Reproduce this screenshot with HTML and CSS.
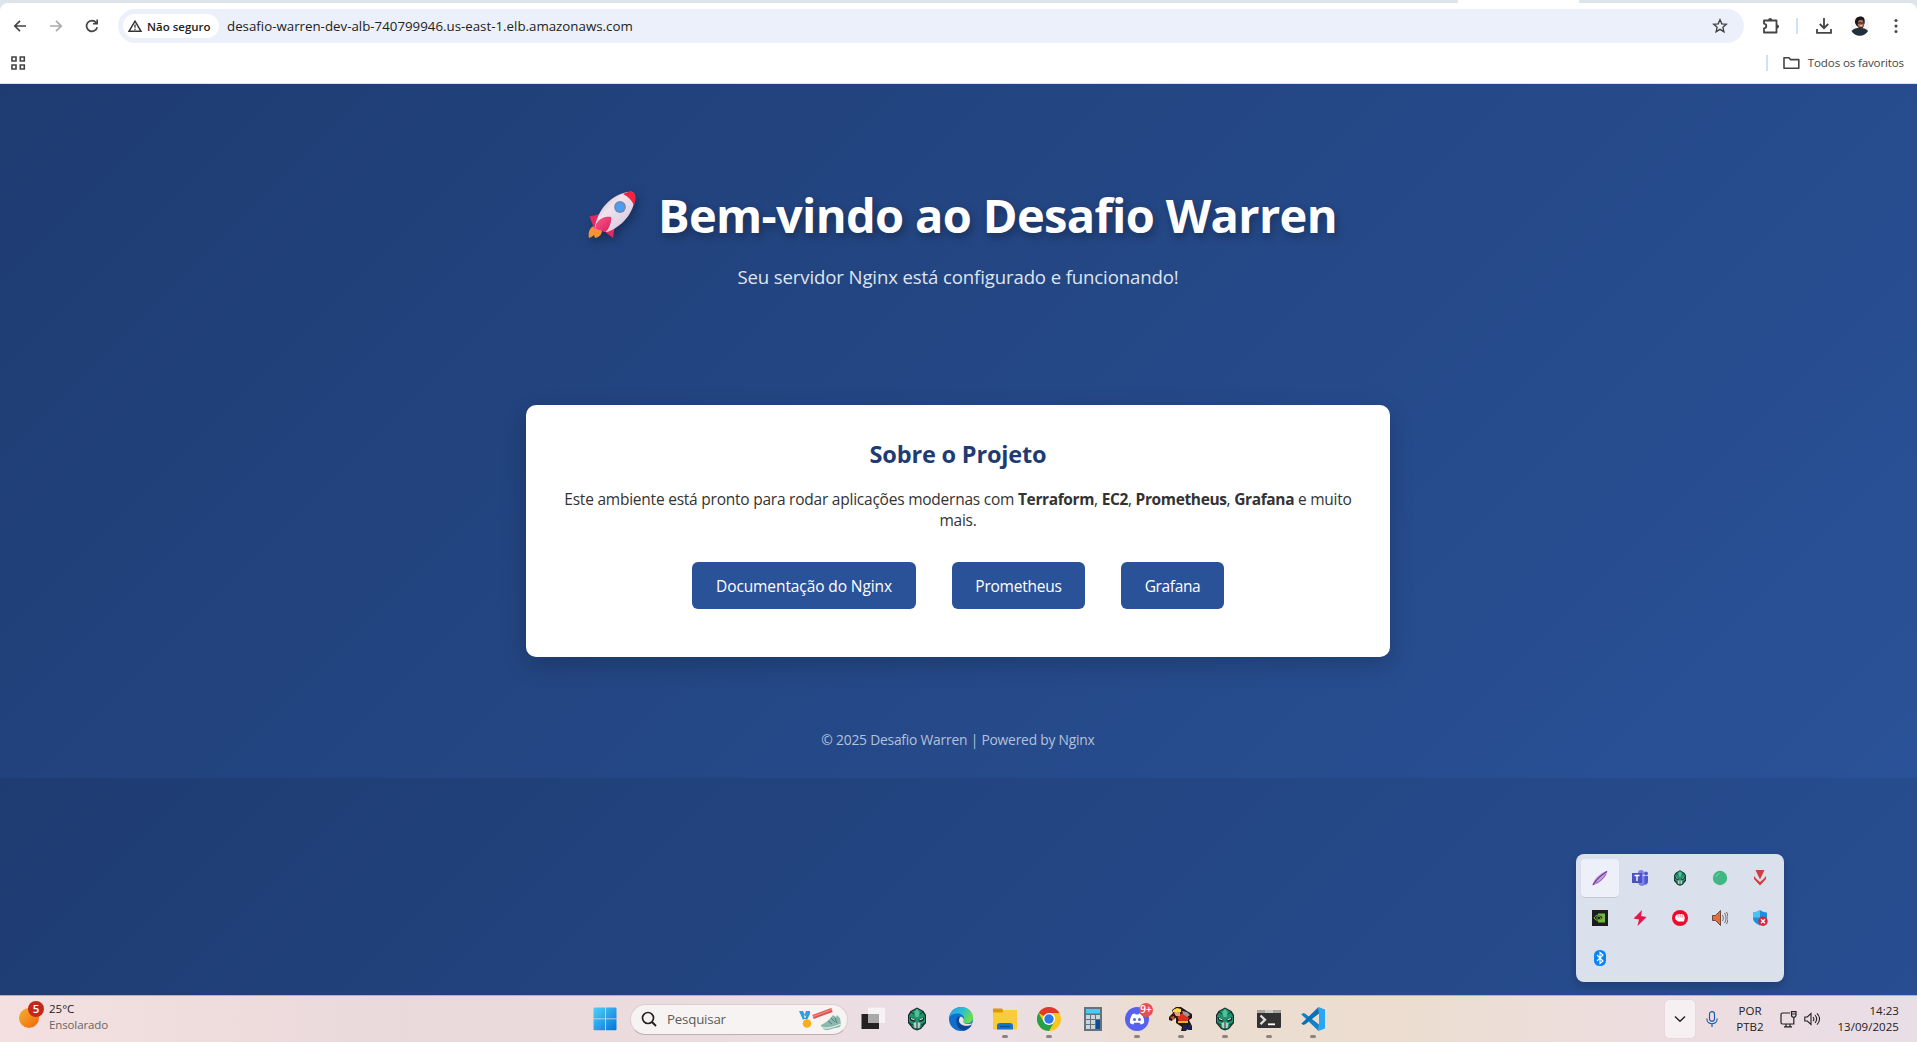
FILE: index.html
```html
<!DOCTYPE html>
<html lang="pt-BR">
<head>
<meta charset="utf-8">
<title>Desafio Warren</title>
<link rel="stylesheet" href="styles.css">
</head>
<body>
<div class="screen">
  <header class="browser">
    <div class="tabstrip"><i class="tab-gap"></i><i class="tab-active"></i></div>
    <div class="toolbar">
      <div class="nav">
        <svg class="ic" viewBox="0 0 16 16"><path d="M14 8H3M8 2.8 2.8 8 8 13.2" fill="none" stroke="#444" stroke-width="1.7"/></svg>
        <svg class="ic dim" viewBox="0 0 16 16"><path d="M2 8h11M8 2.8 13.2 8 8 13.2" fill="none" stroke="#444" stroke-width="1.7"/></svg>
        <svg class="ic" viewBox="0 0 16 16"><path d="M13.2 9.2A5.4 5.4 0 1 1 12 4.4l1 1.2" fill="none" stroke="#444" stroke-width="1.7"/><path d="M14 1.6v5H9V5h3.4V1.6z" fill="#444"/></svg>
      </div>
      <div class="omnibox">
        <div class="chip">
          <svg width="14" height="12" viewBox="0 0 14 12"><path d="M7 1.2 13 11.3H1z" fill="none" stroke="#333" stroke-width="1.4"/><path d="M7 4.6v3.2M7 8.8v1.3" stroke="#333" stroke-width="1.3"/></svg>
          <span>Não seguro</span>
        </div>
        <span class="url">desafio-warren-dev-alb-740799946.us-east-1.elb.amazonaws.com</span>
        <svg class="ic star" viewBox="0 0 16 16"><path d="m8 1.8 1.8 4.1 4.5.4-3.4 3 1 4.4L8 11.4l-3.9 2.3 1-4.4-3.4-3 4.5-.4z" fill="none" stroke="#444" stroke-width="1.4"/></svg>
      </div>
      <div class="actions">
        <svg width="18" height="18" viewBox="0 0 18 18"><path d="M2 3.5v3.2c1.600.300 2.300 1.300 2.300 2.400S3.500 11.200 2 11.500v4h12.500V3.500z" fill="none" stroke="#444" stroke-width="1.8" stroke-linejoin="round"/><path d="M6.200 3a2 2 0 0 1 4 0zM15 7.400a2 2 0 0 1 0 4z" fill="#444"/></svg>
        <i class="rule"></i>
        <svg width="16" height="16" viewBox="0 0 16 16"><path d="M8 0v10M3.800 6 8 10.200 12.200 6M1 11v3.800h14V11" fill="none" stroke="#444" stroke-width="1.800"/></svg>
        <svg class="avatar" width="20" height="20" viewBox="0 0 20 20"><circle cx="10" cy="10" r="9.500" fill="#f5f5f5"/><path d="M1.500 15c2-2.500 5-3 8-3s7 .5 8.500 3a9.500 9.500 0 0 1-16.500 0z" fill="#20303c"/><path d="M5 7C4.500 2.500 7.500.500 10.500.500c3.500 0 4.700 2.500 4 7l-1.500 4-3.500 1-3-3z" fill="#1c1716"/><ellipse cx="10.800" cy="8" rx="3" ry="4.300" fill="#a9705c"/><path d="M7.800 6.400h6v1.200h-6z" fill="#3b2723"/><path d="M8 10.300c1 3.200 4.500 3.200 5.500 0-1 .9-4 .9-5.500 0z" fill="#3e2925"/><path d="M9.800 9.800h2.400" stroke="#eee" stroke-width=".9"/></svg>
        <svg width="4" height="16" viewBox="0 0 4 16"><g fill="#444"><circle cx="2" cy="2.500" r="1.500"/><circle cx="2" cy="8" r="1.500"/><circle cx="2" cy="13.500" r="1.500"/></g></svg>
      </div>
    </div>
    <div class="bookmarks">
      <svg width="15" height="15" viewBox="0 0 15 15"><path d="M1 1h4v4H1zM9.300 1h4v4h-4zM1 9h4v4H1zM9.300 9h4v4h-4z" fill="none" stroke="#444" stroke-width="1.600"/></svg>
      <div class="all-marks"><i class="rule"></i>
        <svg width="17" height="14" viewBox="0 0 17 14"><path d="M1 1.800h5l1.600 1.800h8.200v8.600H1z" fill="none" stroke="#444" stroke-width="1.600" stroke-linejoin="round"/></svg>
        <span>Todos os favoritos</span></div>
    </div>
  </header>

  <main class="page">
    <div class="hero">
      <h1>
        <svg class="rocket" width="49" height="48" viewBox="0 0 49 48">
          <defs>
            <linearGradient id="rb" x1="0" y1="0" x2="1" y2="1"><stop offset="0" stop-color="#b9a6b4"/><stop offset=".4" stop-color="#efe3ee"/><stop offset="1" stop-color="#cfc0dc"/></linearGradient>
            <linearGradient id="rf" x1="0" y1="0" x2="1" y2="1"><stop offset="0" stop-color="#ff5a86"/><stop offset="1" stop-color="#d81f63"/></linearGradient>
          </defs>
          <path d="M7 34C1 37 0 42 1 47c3-1 4-2 5-3l1 3c5-1 7-4 7-8z" fill="#f99332"/>
          <path d="M12 23 1.500 25.500l5 13L15 31z" fill="#e22960"/>
          <path d="M27 34 25 47l-9-7 5-5z" fill="#e22960"/>
          <path d="M6.500 38C9 20 22 3 42 .8c3-.3 5 2 5 5C46 22 34 36 19 41z" fill="url(#rb)"/>
          <path d="M35 3c4-2 7.500-2.400 9.500-2C47 2 48 5 47.500 8c-.3 2-.6 4-1.500 6C43.500 9 40 5.500 35 3z" fill="#ee2440"/>
          <path d="M8 33c4-7 12-8 15-7 1 4-2 13-6 15l-6-2-4-1z" fill="url(#rf)"/>
          <circle cx="32" cy="16" r="5.900" fill="#7388b4"/><circle cx="32" cy="16" r="4.300" fill="#4a9df2"/>
        </svg>
        <span>Bem-vindo ao Desafio Warren</span>
      </h1>
      <p class="lead">Seu servidor Nginx está configurado e funcionando!</p>
    </div>
    <section class="card">
      <h2>Sobre o Projeto</h2>
      <p class="about"><span>Este ambiente está pronto para rodar aplicações modernas com <b>Terraform</b>, <b>EC2</b>, <b>Prometheus</b>, <b>Grafana</b> e muito</span><br>mais.</p>
      <div class="links"><a class="b1">Documentação do Nginx</a><a class="b2">Prometheus</a><a class="b3">Grafana</a></div>
    </section>
    <footer>© 2025 Desafio Warren | Powered by Nginx</footer>
  </main>

  <div class="tray-popup">
    <div class="cell on"><svg viewBox="0 0 16 16"><path d="M.500 15.500C1 9 8 3 15.500.500 14 8 8 13 .500 15.500z" fill="#c3a3dc"/><path d="M1 15C4 10 9 5 15 1.500" stroke="#7334a0" stroke-width="1.300" fill="none"/><path d="M4 13.500c4-2 7-5 10-9.500" stroke="#9560bd" stroke-width="1" fill="none"/></svg></div>
    <div class="cell"><svg viewBox="0 0 16 16"><circle cx="9" cy="3" r="3" fill="#7b83eb"/><circle cx="14" cy="3.500" r="2" fill="#5059c9"/><path d="M6 6h10v5c0 3-2 4-3.500 4C11 17 6 16 6 12z" fill="#7b83eb"/><path d="M12.500 6H16v5c0 2-1.500 3.500-3.500 3.500z" fill="#5059c9"/><path d="M0 3h10v10H0z" fill="#4b53bc"/><path d="M2.500 5.500h5M5 5.500V11" stroke="#fff" stroke-width="1.400"/></svg></div>
    <div class="cell"><svg viewBox="0 0 24 24"><use href="#mask"/></svg></div>
    <div class="cell"><svg viewBox="0 0 16 16"><circle cx="8" cy="8" r="7.200" fill="#41b883"/><path d="M4 7a4.500 4.500 0 0 1 3.500-3.500" stroke="#7fd3ad" fill="none"/></svg></div>
    <div class="cell"><svg viewBox="0 0 16 16"><path d="M3.500 0h9L8 9.500z" fill="#d63b3f"/><path d="M2 6v3l6 6.500L14 9V6l-2.500 3L8 12 4.500 9z" fill="#d63b3f"/></svg></div>
    <div class="cell"><svg viewBox="0 0 16 16"><path d="M0 0h16v16H0z" fill="#1c1c1e"/><path d="M6 3.500h7v9H6z" fill="#76b93f"/><path d="M2 8c2-3.500 6-4 9-.5-2.500 4-6.500 4-9 .5z" fill="#1c1c1e"/><path d="M2 8c2-3.500 6-4 9-.5-2.500 4-6.500 4-9 .5zM4.500 8c1-2 3.500-2 4.500 0-1 2-3.500 2-4.500 0z" fill="none" stroke="#76b93f" stroke-width="1"/></svg></div>
    <div class="cell"><svg viewBox="0 0 16 16"><path d="M10 0 1.500 8.500l5.500 1L5.500 16l9-9-5.500-1z" fill="#e6154c"/></svg></div>
    <div class="cell"><svg viewBox="0 0 16 16"><circle cx="8" cy="8" r="8" fill="#ec0b2f"/><path d="M3 7 4.500 4.800 7 4l3 0 2 1 .8 3L12 11.500H6L3.500 9.500z" fill="#fff"/><path d="M6.200 4.500v3M8.200 4v3.500M10.200 4.500v3" stroke="#ec0b2f" stroke-width=".5"/></svg></div>
    <div class="cell"><svg viewBox="0 0 16 16"><path d="M.5 5.500h3L8.500.5v15l-5-5h-3z" fill="#e0703f" stroke="#5f4034" stroke-width=".9"/><path d="M10.500 5c1 1.500 1 4.500 0 6M12.500 3c2 3 2 7 0 10M14.500 2c2 4 2 8 0 12" fill="none" stroke="#6a5850" stroke-width=".9"/></svg></div>
    <div class="cell"><svg viewBox="0 0 16 16"><path d="M1 2.500C4 2.500 6 1.500 8 0c2 1.500 4 2.500 7 2.500V8c0 4-4 6-7 7.500C4 13.500 1 11.500 1 8z" fill="#1e8fdc"/><path d="M1 7.500h7V0C6 1.500 4 2.500 1 2.500z" fill="#4cc2f1"/><circle cx="11" cy="11.300" r="4.700" fill="#d7263a"/><path d="m9 9.300 4 4m0-4-4 4" stroke="#fff" stroke-width="1.400"/></svg></div>
    <div class="cell"><svg viewBox="0 0 16 16"><rect x="2" width="12" height="16" rx="5.500" fill="#0a84f5"/><path d="m5 5 6 6-3 2.500v-11L11 5l-6 6" fill="none" stroke="#fff" stroke-width="1.100"/></svg></div>
  </div>

  <div class="taskbar">
    <div class="weather">
      <svg width="30" height="30" viewBox="0 0 30 30"><defs><linearGradient id="sun" x1="0" y1="0" x2="1" y2="1"><stop offset="0" stop-color="#f3b52e"/><stop offset="1" stop-color="#f2620c"/></linearGradient></defs><circle cx="11" cy="17" r="10" fill="url(#sun)"/><circle cx="18" cy="8" r="8" fill="#c4281c"/><text x="18" y="12" text-anchor="middle" class="badge">5</text></svg>
      <div class="two"><span>25°C</span><span class="soft">Ensolarado</span></div>
    </div>
    <div class="apps">
      <div class="app start"><svg viewBox="0 0 24 24"><defs><linearGradient id="win" x1="0" y1="0" x2="1" y2="1"><stop offset="0" stop-color="#4fd2fb"/><stop offset="1" stop-color="#0673d3"/></linearGradient></defs><path d="M1.500.500H12v11H.500v-10a1 1 0 0 1 1-1zM12.800.500h9.700a1 1 0 0 1 1 1v10H12.800zM.500 12.300H12v11H1.500a1 1 0 0 1-1-1zM12.800 12.300h10.700v10a1 1 0 0 1-1 1h-9.700z" fill="url(#win)"/></svg></div>
      <div class="search">
        <svg width="16" height="16" viewBox="0 0 16 16"><circle cx="7" cy="7" r="5.500" fill="none" stroke="#222" stroke-width="1.700"/><path d="m11 11 4 4" stroke="#222" stroke-width="1.900"/></svg>
        <span>Pesquisar</span>
        <svg class="deco" width="44" height="24" viewBox="0 0 44 24"><path d="M1 4h4l3 6-3 3zM12 4H8L6 10l3 3 3-6z" fill="#2b9fe0"/><circle cx="9" cy="16.500" r="4.300" fill="#f9b018"/><path d="M15 10 34 3" stroke="#d9534d" stroke-width="4"/><path d="M15 9.500 34 2.500" stroke="#ed837b" stroke-width="1.500"/><path d="M23 18c5-2 9-6 12-10l3 2 1-2 3 3 1 6c0 3-3 4-6 4l-7 2c-4 .5-7-2-7-5z" fill="#8ab8ae"/><path d="m30 14 4 3M33 11l4 4M37 11l2 5" stroke="#4d7f7c"/><path d="M23 20c5 3 13 0 20-3" stroke="#e5eeea" stroke-width="1.300" fill="none"/></svg>
      </div>
      <div class="app"><svg viewBox="0 0 24 24"><path d="M7 .500h17V16H7z" fill="#f5f3f3"/><path d="M.500 7H18v15H.500z" fill="#222"/><path d="M7 7h11v9H7z" fill="#aaa8a8"/></svg></div>
      <div class="app"><svg viewBox="0 0 24 24"><g id="mask"><path d="M12 .500 18.500 4 21 8v8l-5 6-4 1.500L8 22l-5-6V8l2.500-4z" fill="#16252a"/><path d="m12 1.500 5.500 3.200L20 9v6l-4.500 6-3.500 1.500L8.500 21 4 15V9l2.500-4.300z" fill="#20916a"/><path d="m12 2 2.500 3-1 5h-3l-1-5z" fill="#4cc497"/><path d="m4.500 10 6 2.500-1 2.500-4-1.500zM19.500 10l-6 2.500 1 2.500 4-1.500z" fill="#15292d"/><path d="m6 11.500 3.500 1.300M18 11.500l-3.500 1.300" stroke="#eafff4"/><path d="m8.500 16 3.500-1 3.500 1-1 5H9.500z" fill="#bacfc6"/><path d="M12 15v8M9 7 6 5M15 7l3-2M4 16l4 2M20 16l-4 2" stroke="#123b34"/></g></svg></div>
      <div class="app"><svg viewBox="0 0 24 24"><defs><linearGradient id="e1" x1="0" y1="0" x2="1" y2=".4"><stop offset="0" stop-color="#2d9fe6"/><stop offset=".55" stop-color="#28bdd2"/><stop offset="1" stop-color="#6ade4c"/></linearGradient></defs><circle cx="12" cy="12" r="12" fill="#0f6fcd"/><path d="M.2 10C1.500 3.500 6.500 0 12 0c7 0 12 5 12 10.500 0 4-3 6-6 6s-4-1.500-3.500-2.500c1.500-2 .500-6.500-4.500-7.500C5.500 6 2 7.500.2 10z" fill="url(#e1)"/><path d="M8.500 10c-3 5 .5 13 6 13.700 4-.7 7-3.200 8.300-6-6 3.300-13.300.5-12.800-4.700.2-1.500.8-2.500 1.500-3.300z" fill="#11458f"/><path d="M11.500 9.700c2 0 3.500 2 3.300 3.600-.8 1.700-.6 2.700 1.700 3.400 2 .7 4.500.4 6-.5l.4 1c-6 3.500-13 .500-12.900-4 0-1.500.5-2.500 1.500-3.500z" fill="#eee2e4"/></svg></div>
      <div class="app run"><svg viewBox="0 0 24 24"><path d="M0 1.500h9l2 3-2 3H0z" fill="#d79a0b"/><path d="M0 5.500h9L11.500 3H24v19.500H0z" fill="#fccb3c"/><path d="M4 22.500V19a3 3 0 0 1 3-3h10a3 3 0 0 1 3 3v3.500z" fill="#1774ce"/><path d="M7 19.500h10" stroke="#0d4c94" stroke-width="1.200"/></svg></div>
      <div class="app run"><svg viewBox="0 0 24 24"><circle cx="12" cy="12" r="12" fill="#fcc61d"/><path d="M12 12 1.600 6A12 12 0 0 1 22.400 6H12z" fill="#e0392d"/><path d="M1.600 6A12 12 0 0 0 12 24l5.200-9L12 12 6.800 15z" fill="#279f4b"/><circle cx="12" cy="12" r="6" fill="#fff"/><circle cx="12" cy="12" r="4.700" fill="#2a78ec"/></svg></div>
      <div class="app"><svg viewBox="0 0 24 24"><path d="M3 0h18v24H3z" fill="#64717f"/><path d="M5 2h14v4.500H5z" fill="#45cdf5"/><path d="M5 8h4v4H5zM10 8h4v4h-4zM15 8h4v4h-4zM5 13h4v4H5zM10 13h4v4h-4zM5 18h4v4H5zM10 18h4v4h-4z" fill="#ccd5da"/><path d="M15 13h4v9h-4z" fill="#0d4f94"/></svg></div>
      <div class="app run"><svg viewBox="0 0 24 24"><circle cx="12" cy="12" r="12" fill="#5661ef"/><path d="M7.500 7 10 6.500l.5 1h3l.5-1 2.500.5c2 3 3 6 2.500 9-1 .8-2 1.300-3.300 1.500l-1-1.700H9.300l-1 1.700C7 17.300 6 16.800 5 16c-.500-3 .500-6 2.500-9z" fill="#fff"/><circle cx="9.500" cy="12.500" r="1.500" fill="#5661ef"/><circle cx="14.500" cy="12.500" r="1.500" fill="#5661ef"/></svg><span class="count">9+</span></div>
      <div class="app run"><svg viewBox="0 0 24 24"><path d="m0 10 4-4-1-3 4-3h5l6 4 5 3v4l-3 2 3 6v4h-4l-1-1-1 2h-5l1-4-6-4v-5l-3 1-1 2-3-1z" fill="#241714"/><path d="m8 8 7-2 5 5-2 5-8-1-1-4z" fill="#dc2d1f"/><path d="M9 14h10v2H9z" fill="#eeb22b"/><path d="m4 3 4-2 4 1v3L7 6 4 5z" fill="#ffd94b"/><path d="m5 6 6-1v4H7z" fill="#e8a278"/><path d="m13 4 5 1 3 3-3 2-4-3z" fill="#9d9897"/><path d="m1 10 4-1 1 3-2 1z" fill="#b95837"/><path d="M14 18h4v5h-4zM19 18h3v5h-3z" fill="#1c2354"/></svg></div>
      <div class="app run"><svg viewBox="0 0 24 24"><use href="#mask"/></svg></div>
      <div class="app run"><svg viewBox="0 0 24 24"><rect y="3" width="24" height="18" rx="1.200" fill="#323232"/><path d="M1 3h22a1 1 0 0 1 1 1v2H0V4a1 1 0 0 1 1-1z" fill="#a5a3a2"/><path d="M8 3h8v3H8z" fill="#c9c6c4"/><path d="m3.500 8.500 4.500 4.300-4.500 4.300" fill="none" stroke="#ddd" stroke-width="2.300"/><path d="M11 17.300h7" stroke="#fff" stroke-width="1.800"/></svg></div>
      <div class="app run"><svg viewBox="0 0 24 24"><path d="m17.500 24-1-1L2 9 .3 7.500 2.300 6l2 .8L18 17.500z" fill="#0f82cb"/><path d="m17.500 0-1 1L2 15 .3 16.500 2.300 18l2-.8L18 6.500z" fill="#0a70b7"/><path d="M17.500 0 24 2.500v19L17.500 24l-1-1c.8.4 1.500 0 1.500-1V2c0-1-.7-1.400-1.500-1z" fill="#2aa7f2"/></svg></div>
    </div>
    <div class="tray">
      <div class="chev"><svg width="12" height="8" viewBox="0 0 12 8"><path d="m1 1.500 5 4.800 5-4.800" fill="none" stroke="#222" stroke-width="1.400"/></svg></div>
      <svg width="12" height="16" viewBox="0 0 12 16"><rect x="3.500" y=".7" width="5" height="9.500" rx="2.500" fill="none" stroke="#1c5cb0" stroke-width="1.200"/><path d="M.8 7.500c0 7 10.400 7 10.400 0M6 12.700V16" fill="none" stroke="#1c5cb0" stroke-width="1.200"/></svg>
      <div class="two lang"><span>POR</span><span>PTB2</span></div>
      <svg class="net" width="17" height="17" viewBox="0 0 17 17"><path d="M10 2H2.500a1.500 1.500 0 0 0-1.500 1.500v8A1.500 1.500 0 0 0 2.500 13h11.300V7M4 15.800h8M6 13v2.800M10 13v2.800M11.500.600h4.500V4a2.200 2.200 0 0 1-4.500 0zM12 3h4M13.800 6v2" fill="none" stroke="#222" stroke-width="1.200"/></svg>
      <svg class="vol" width="17" height="14" viewBox="0 0 17 14"><path d="M.8 5h2.500L7 1.500v11L3.300 9H.8zM9 5c1 1.200 1 3 0 4M11 3c2 2.400 2 5.600 0 8M13 1.300c3.400 3.400 3.400 8 0 11.400" fill="none" stroke="#222" stroke-width="1.100"/></svg>
      <div class="two clock"><span>14:23</span><span>13/09/2025</span></div>
    </div>
  </div>
</div>
</body>
</html>
```
FILE: styles.css
```css
* { box-sizing: border-box; }
body { margin: 0; font-family: "Open Sans", "Noto Sans", sans-serif; }
h1, h2, p { margin: 0; }
svg { display: block; flex: none; }
i { display: block; flex: none; }
span { white-space: nowrap; }

.screen { width: 1917px; height: 1042px; position: relative; display: flex; flex-direction: column; overflow: hidden; }

.browser { height: 84px; background: linear-gradient(#dee5ea 0 12px, #fff 12px); border-bottom: 1px solid #dfe1e5; flex: none; }
.tabstrip { height: 3px; display: flex; background: #dee5ea; }
.tab-gap { width: 1458px; border-bottom-right-radius: 6px; }
.tab-active { width: 121px; background: #fff; }
.toolbar { height: 46px; display: flex; align-items: center; background: #fff; border-radius: 8px 8px 0 0; }
.nav { display: flex; width: 118px; padding-left: 12px; gap: 20px; }
.ic { width: 16px; height: 16px; }
.dim { opacity: .45; }
.omnibox { width: 1626px; height: 34px; border-radius: 17px; background: #ebf0fa; display: flex; align-items: center; padding: 0 16px 0 5px; }
.chip { width: 96px; height: 24px; border-radius: 12px; background: #fff; display: flex; align-items: center; gap: 5px; padding-left: 5px; font-size: 11.5px; font-weight: 600; color: #222; }
.url { margin-left: 8px; font-size: 13.3px; color: #222; }
.star { margin-left: auto; }
.actions { display: flex; align-items: center; padding-left: 18px; }
.rule { width: 2px; height: 16px; background: #cfe0fb; }
.actions .rule { margin: 0 18px 0 16px; }
.avatar { margin: 0 24px 0 18px; }
.bookmarks { height: 34px; display: flex; align-items: center; justify-content: space-between; padding: 0 13px 7px 10.5px; background: #fff; }
.bookmarks > svg { margin-top: 1px; }
.all-marks { display: flex; align-items: center; font-size: 11.6px; letter-spacing: -.15px; color: #444; }
.all-marks svg { margin: 0 8px 0 15px; }

.page { height: 911px; flex: none; padding-right: 1px; background: linear-gradient(135deg, #1e3c72, #2a5298) 0 0 / 100% 694px; text-align: center; }
.hero { height: 321px; padding-top: 99px; }
h1 { display: flex; align-items: center; justify-content: center; gap: 21px; height: 64px; font-size: 47px; line-height: 64px; letter-spacing: -.66px; color: #fff; text-shadow: 2px 4px 8px rgba(0,0,0,.3); }
.rocket { margin-left: 9px; filter: drop-shadow(2px 4px 4px rgba(0,0,0,.3)); }
.lead { margin-top: 17px; font-size: 18.6px; line-height: 26px; letter-spacing: -.13px; color: #dfe4ee; }
.card { width: 864px; height: 252px; margin: 0 auto; padding: 32px; background: #fff; border-radius: 10px; box-shadow: 0 8px 24px rgba(0,0,0,.2); color: #333; }
h2 { font-size: 23.5px; line-height: 34px; letter-spacing: -.17px; color: #1e3c72; }
.about { margin-top: 18px; font-size: 15.5px; line-height: 21px; letter-spacing: -.23px; }
.about b { letter-spacing: -.37px; }
.links { display: flex; justify-content: center; gap: 36px; margin-top: 31px; }
.links a { height: 47px; border-radius: 6px; background: #2a5298; color: #fff; font-size: 15.5px; line-height: 48px; display: flex; justify-content: center; }
.b1 { width: 224px; letter-spacing: -.1px; }
.b2 { width: 133px; letter-spacing: -.23px; }
.b3 { width: 103px; letter-spacing: -.35px; }
footer { margin-top: 73px; font-size: 13.8px; font-weight: 500; line-height: 20px; letter-spacing: -.2px; color: #b4c1da; }

.tray-popup { position: absolute; left: 1576px; top: 854px; width: 208px; height: 128px; padding: 4px; border-radius: 8px; background: #dae0ec; display: grid; grid-template-columns: repeat(5, 40px); grid-auto-rows: 40px; box-shadow: 0 4px 10px rgba(0,0,0,.2); }
.cell { display: grid; place-items: center; margin: 1px; border-radius: 4px; }
.cell.on { background: #edf0f8; box-shadow: 0 1px 1px rgba(0,0,0,.1); }
.cell svg { width: 16px; height: 16px; }

.taskbar { height: 47px; flex: none; border-top: 1px solid #b9aeb4; display: flex; background: linear-gradient(90deg, #f4e0e0 0, #ead9db 400px, #ecdcdd 700px, #ebdfe7 980px, #ecddd2 1150px, #ecddd0 1400px, #eedddf 1640px, #e9dde6 1917px); color: #222; font-size: 11.5px; }
.weather { width: 583px; display: flex; padding: 5px 0 0 18px; gap: 1px; }
.badge { font-size: 11.5px; font-weight: 600; fill: #fff; }
.two { display: flex; flex-direction: column; line-height: 16px; }
.soft { color: #666; letter-spacing: -.12px; }
.apps { display: flex; align-items: center; }
.app { width: 44px; height: 46px; display: grid; place-items: center; position: relative; }
.app svg { width: 24px; height: 24px; }
.start { width: 43px; margin-right: 4px; }
.search { width: 218px; height: 31px; border-radius: 16px; background: #f7f3f3; border: 1px solid #dccfd1; border-bottom-color: #bcb0b2; margin-right: 3px; display: flex; align-items: center; padding: 0 5px 0 10px; gap: 10px; font-size: 13.3px; letter-spacing: -.2px; color: #5c5c5c; }
.deco { margin-left: auto; }
.run::after { content: ""; position: absolute; left: 19px; top: 39px; width: 6px; height: 3px; border-radius: 2px; background: #8b8380; }
.count { position: absolute; left: 24px; top: 7px; width: 14px; height: 14px; border-radius: 7px; background: #ea4e50; color: #fff; font-size: 10px; font-weight: 600; line-height: 13px; text-align: center; }
.tray { width: 582px; display: flex; align-items: center; padding-left: 330px; }
.chev { width: 30px; height: 38px; border-radius: 4px; background: #f7f0f2; display: grid; place-items: center; margin-right: 11px; box-shadow: 0 0 1px rgba(0,0,0,.2); }
.lang { width: 40px; margin-left: 12px; text-align: center; }
.net { margin-left: 10px; }
.vol { margin-left: 7px; }
.clock { margin-left: auto; padding-right: 18px; text-align: right; letter-spacing: .05px; }
```
